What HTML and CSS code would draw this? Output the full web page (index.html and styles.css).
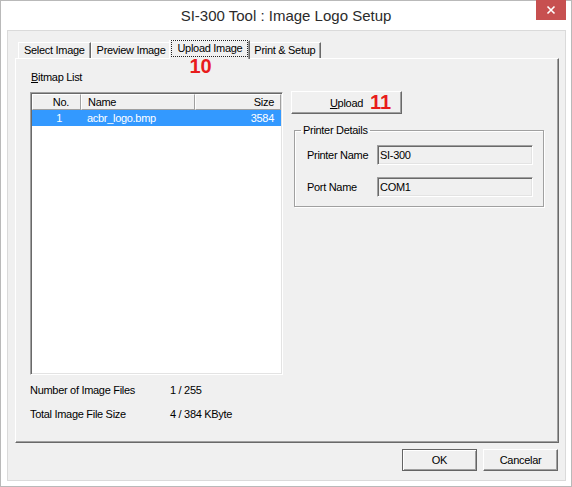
FILE: index.html
```html
<!DOCTYPE html>
<html lang="en">
<head>
	<meta charset="UTF-8">
	<title>SI-300 Tool : Image Logo Setup</title>
	<link rel="stylesheet" href="styles.css">
</head>
<body>
<div class="window">
	<div class="titlebar">
		<h1 class="title">SI-300 Tool : Image Logo Setup</h1>
		<button class="close" type="button">
			<svg width="10" height="10" viewBox="0 0 10 10"><path d="M1.5 1.5L8.5 8.5M8.5 1.5L1.5 8.5" stroke="#fff" stroke-width="1.6" fill="none"/></svg>
		</button>
	</div>
	<div class="client">
		<ul class="tabs">
			<li class="tab">Select Image</li>
			<li class="tab">Preview Image</li>
			<li class="tab active"><span class="focus">Upload Image</span><span class="step step-tab">10</span></li>
			<li class="tab">Print &amp; Setup</li>
		</ul>
		<div class="panel">
			<div class="listcol">
				<div class="caption"><u>B</u>itmap List</div>
				<div class="listview">
					<div class="lv-row lv-head">
						<div class="cell num">No.</div>
						<div class="cell">Name</div>
						<div class="cell size">Size</div>
					</div>
					<div class="lv-row lv-item selected">
						<div class="cell num">1</div>
						<div class="cell">acbr_logo.bmp</div>
						<div class="cell size">3584</div>
					</div>
				</div>
				<div class="stats">
					<span>Number of Image Files</span><span>1 / 255</span>
					<span>Total Image File Size</span><span>4 / 384 KByte</span>
				</div>
			</div>
			<div class="sidecol">
				<button class="btn upload" type="button"><u>U</u>pload<span class="step step-btn">11</span></button>
				<fieldset class="group">
					<legend>Printer Details</legend>
					<div class="field">
						<label for="pname">Printer Name</label>
						<input id="pname" type="text" value="SI-300" readonly>
					</div>
					<div class="field">
						<label for="pport">Port Name</label>
						<input id="pport" type="text" value="COM1" readonly>
					</div>
				</fieldset>
			</div>
		</div>
		<div class="footer">
			<button class="btn default" type="button">OK</button>
			<button class="btn" type="button">Cancelar</button>
		</div>
	</div>
</div>
</body>
</html>
```
FILE: styles.css
```css
*{margin: 0;padding: 0;box-sizing: border-box;}
ul{list-style: none;}
body{
	font: 11px/13px "Liberation Sans", Arial, sans-serif;
	letter-spacing: -0.3px;
	color: #000;
	background: #fff;
}
button, input{
	font: inherit;
	letter-spacing: inherit;
	color: inherit;
}

/* window frame */
.window{
	width: 572px;
	height: 487px;
	border: 1px solid #b9b9b9;
	background: #fff;
	display: flex;
	flex-direction: column;
}
.titlebar{
	height: 29px;
	flex: none;
	display: grid;
	grid-template-columns: 1fr auto 1fr;
	align-items: start;
}
.title{
	grid-column: 2;
	font: 15px/29px "Liberation Sans", Arial, sans-serif;
	letter-spacing: 0;
	color: #2b2b2b;
}
.close{
	grid-column: 3;
	justify-self: end;
	width: 30px;
	height: 20px;
	margin: -1px 5px 0 0;
	border: 0;
	background: #c75050;
	display: flex;
	align-items: center;
	justify-content: center;
}
.client{
	flex: 1;
	margin: 0 5px 5px 6px;
	border: 1px solid #dadada;
	background: #f0f0f0;
	display: flex;
	flex-direction: column;
}

/* tab strip */
.tabs{
	display: flex;
	align-items: flex-end;
	padding: 9px 0 0 10px;
}
.tab{
	height: 16px;
	padding: 0 5px;
	line-height: 15px;
	border-top: 1px solid #fff;
	border-left: 1px solid #fff;
	border-right: 1px solid #696969;
	box-shadow: inset -1px 0 #a0a0a0;
	white-space: nowrap;
}
.tab.active{
	height: 19px;
	margin: 0 -2px -1px;
	padding: 0 2px;
	background: #f0f0f0;
	position: relative;
	z-index: 1;
}
.focus{
	display: block;
	padding: 0 5px;
	height: 15px;
	outline: 1px dotted #222;
}
.step{
	font: bold 20px/20px "Liberation Sans", Arial, sans-serif;
	letter-spacing: 0;
	color: #e81c1c;
	position: absolute;
}
.step-tab{
	left: 19px;
	top: 15px;
}
.step-btn{
	left: 78px;
	top: 0;
}

/* page */
.panel{
	height: 385px;
	flex: none;
	margin: 0 6px 0 7px;
	padding: 12px 0 0 14px;
	border: 1px solid;
	border-color: #fff #696969 #696969 #fff;
	box-shadow: inset -1px -1px #a0a0a0;
	display: flex;
	gap: 8px;
}
.listcol{
	width: 253px;
}
.caption{
	margin: 0 0 8px 1px;
}
.listview{
	width: 253px;
	height: 283px;
	padding: 1px;
	border: 1px solid;
	border-color: #a0a0a0 #fff #fff #a0a0a0;
	box-shadow: inset 1px 1px #696969, inset -1px -1px #e3e3e3;
	background: #fff;
}
.lv-row{
	display: grid;
	grid-template-columns: 49px 114px 86px;
	height: 16px;
}
.cell{
	padding: 0 6px;
	white-space: nowrap;
	overflow: hidden;
}
.lv-head .cell{
	background: #f0f0f0;
	line-height: 14px;
	border-top: 1px solid #fff;
	border-left: 1px solid #fff;
	border-right: 1px solid #a0a0a0;
	border-bottom: 1px solid #a0a0a0;
}
.lv-head .num{
	text-align: right;
	padding-right: 11px;
}
.lv-item{
	line-height: 16px;
}
.lv-item .num{
	text-align: right;
	padding-right: 19px;
}
.lv-item .cell:nth-child(2){
	padding-left: 6px;
}
.size{
	text-align: right;
	padding-right: 6px;
}
.lv-item .size{
	padding-right: 7px;
}
.selected{
	background: #3399ff;
	color: #fff;
}
.stats{
	margin-top: 9px;
	display: grid;
	grid-template-columns: 140px auto;
	row-gap: 11px;
}

/* right side */
.sidecol{
	width: 253px;
	padding-top: 20px;
}
.btn{
	width: 75px;
	height: 22px;
	border: 1px solid;
	border-color: #fff #696969 #696969 #fff;
	box-shadow: inset -1px -1px #a0a0a0;
	background: #f0f0f0;
	line-height: 18px;
}
.btn.upload{
	width: 111px;
	height: 23px;
	position: relative;
}
.btn.default{
	border-color: #646464;
	box-shadow: inset 1px 1px #fff, inset -1px -1px #a0a0a0;
}
.group{
	width: 250px;
	margin: 10px 0 0 3px;
	padding: 0 9px 9px 0;
	border: 1px solid #a0a0a0;
	box-shadow: inset 1px 1px #fff, 1px 1px #fff;
}
.group legend{
	margin-left: 6px;
	padding: 0 2px;
	line-height: 13px;
}
.field{
	display: grid;
	grid-template-columns: 70px 156px;
	align-items: center;
	margin: 12px 0 0 12px;
}
.group legend + .field{
	margin-top: 8px;
}
.field input{
	height: 20px;
	padding: 0 2px;
	border: 1px solid;
	border-color: #a0a0a0 #fff #fff #a0a0a0;
	box-shadow: inset 1px 1px #696969, inset -1px -1px #e3e3e3;
	background: #f0f0f0;
	outline: none;
}

/* dialog buttons */
.footer{
	display: flex;
	justify-content: flex-end;
	gap: 6px;
	padding: 6px 7px 0 0;
}
```
